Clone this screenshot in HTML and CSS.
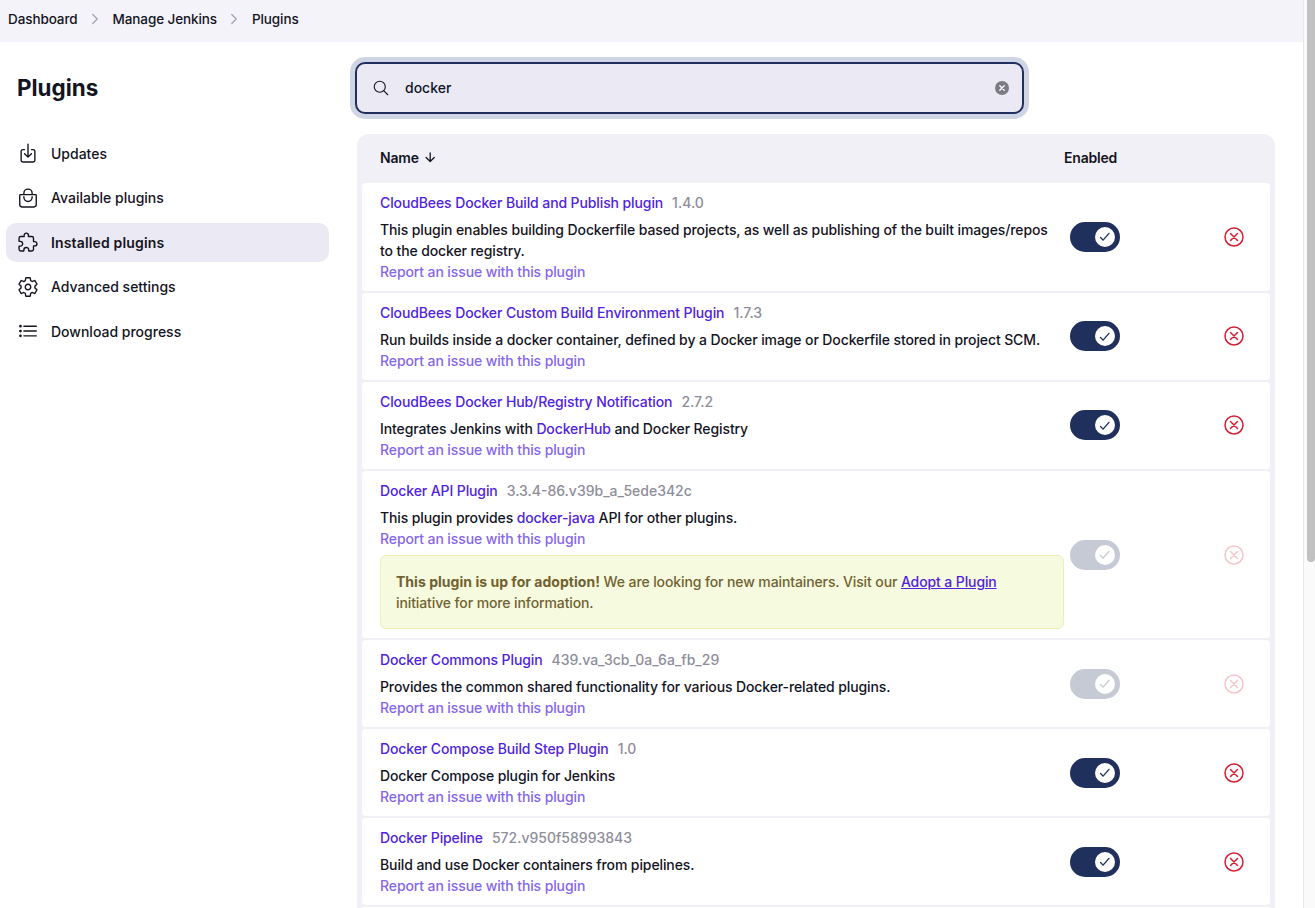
FILE: index.html
```html
<!DOCTYPE html>
<html lang="en">
<head>
  <meta charset="UTF-8" />
  <title>Plugins</title>
  <link rel="stylesheet" href="styles.css">
</head>
<body>

<div id="scrollbar"><div id="scroll-thumb"></div></div>

<!-- Breadcrumbs -->
<nav class="breadcrumbs">
  <span>Dashboard</span>
  <svg class="crumb-sep" viewBox="0 0 512 512"><path d="M184 112l144 144-144 144"/></svg>
  <span>Manage Jenkins</span>
  <svg class="crumb-sep" viewBox="0 0 512 512"><path d="M184 112l144 144-144 144"/></svg>
  <span>Plugins</span>
</nav>

<div class="page">
  <aside class="sidebar">
    <h1>Plugins</h1>
    <ul class="side-nav">
      <li>
        <svg class="side-icon" viewBox="0 0 512 512"><path d="M336 176h40a40 40 0 0140 40v208a40 40 0 01-40 40H136a40 40 0 01-40-40V216a40 40 0 0140-40h40"/><path d="M176 272l80 80 80-80M256 48v288"/></svg>
        Updates
      </li>
      <li>
        <svg class="side-icon" viewBox="0 0 512 512"><path d="M80 176a16 16 0 00-16 16v216c0 30.240 25.760 56 56 56h272c30.240 0 56-24.510 56-54.750V192a16 16 0 00-16-16zM160 176v-32a96 96 0 0196-96h0a96 96 0 0196 96v32"/><path d="M160 224v16a96 96 0 0096 96h0a96 96 0 0096-96v-16"/></svg>
        Available plugins
      </li>
      <li class="active">
        <svg class="side-icon" viewBox="0 0 512 512"><path d="M413.660 246.100H386a2 2 0 01-2-2v-77.240A38.860 38.860 0 00345.140 128H267.900a2 2 0 01-2-2V98.340c0-27.140-21.500-49.860-48.640-50.330a49.530 49.530 0 00-50.400 49.510V126a2 2 0 01-2 2H87.620A39.740 39.740 0 0048 167.620V238a2 2 0 002 2h26.910c29.370 0 53.680 25.480 54.090 54.850.42 29.870-23.510 57.150-53.290 57.150H50a2 2 0 00-2 2v70.380A39.740 39.740 0 0087.620 464H158a2 2 0 002-2v-20.930c0-30.280 24.750-56.350 55-57.060 30.100-.7 57 20.310 57 50.280V462a2 2 0 002 2h71.140A38.860 38.860 0 00384 425.140v-78a2 2 0 012-2h28.480c27.630 0 49.520-22.670 49.520-50.400s-23.200-48.640-50.340-48.640z"/></svg>
        Installed plugins
      </li>
      <li>
        <svg class="side-icon" viewBox="0 0 512 512"><path d="M262.290 192.310a64 64 0 1057.400 57.400 64.130 64.130 0 00-57.400-57.400zM416.390 256a154.340 154.340 0 01-1.530 20.790l45.210 35.460a10.810 10.810 0 012.450 13.750l-42.770 74a10.810 10.810 0 01-13.140 4.590l-44.900-18.080a16.110 16.110 0 00-15.170 1.750A164.480 164.480 0 01325 400.800a15.940 15.940 0 00-8.820 12.140l-6.730 47.890a11.080 11.080 0 01-10.680 9.170h-85.540a11.110 11.110 0 01-10.690-8.870l-6.720-47.820a16.070 16.070 0 00-9-12.220 155.300 155.300 0 01-21.460-12.570 16 16 0 00-15.110-1.710l-44.890 18.070a10.810 10.810 0 01-13.140-4.580l-42.770-74a10.800 10.800 0 012.450-13.750l38.210-30a16.050 16.050 0 006-14.080c-.36-4.170-.58-8.330-.58-12.500s.21-8.270.58-12.350a16 16 0 00-6.070-13.940l-38.190-30A10.810 10.810 0 0149.480 186l42.770-74a10.810 10.810 0 0113.140-4.590l44.900 18.080a16.110 16.110 0 0015.170-1.750A164.480 164.480 0 01187 111.200a15.940 15.940 0 008.820-12.140l6.730-47.890A11.080 11.080 0 01213.230 42h85.540a11.110 11.110 0 0110.690 8.870l6.720 47.820a16.070 16.070 0 009 12.220 155.300 155.300 0 0121.460 12.570 16 16 0 0015.110 1.710l44.890-18.070a10.810 10.810 0 0113.140 4.580l42.770 74a10.800 10.800 0 01-2.450 13.750l-38.210 30a16.050 16.050 0 00-6.050 14.080c.33 4.140.55 8.300.55 12.470z"/></svg>
        Advanced settings
      </li>
      <li>
        <svg class="side-icon" viewBox="0 0 512 512"><path d="M160 144h288M160 256h288M160 368h288"/><circle cx="80" cy="144" r="16"/><circle cx="80" cy="256" r="16"/><circle cx="80" cy="368" r="16"/></svg>
        Download progress
      </li>
    </ul>
  </aside>

  <main class="content">
    <div class="search-box">
      <svg class="search-icon" viewBox="0 0 512 512"><path d="M221.090 64a157.090 157.090 0 10157.090 157.090A157.100 157.100 0 00221.090 64z"/><path d="M338.290 338.290L448 448"/></svg>
      <span class="search-text">docker</span>
      <svg class="search-clear" viewBox="0 0 14 14"><circle cx="7" cy="7" r="7"/><path d="m4.800 4.800 4.400 4.400m0-4.400-4.400 4.400"/></svg>
    </div>

    <div class="plugin-table">
      <div class="table-head">
        <div class="col-name">Name
          <svg class="sort-arrow" viewBox="0 0 512 512"><path d="M112 268l144 144 144-144M256 392V100"/></svg>
        </div>
        <div class="col-enabled">Enabled</div>
      </div>

      <div class="plugin-row first">
        <div class="plugin-info">
          <div class="plugin-title"><a>CloudBees Docker Build and Publish plugin</a><span class="version">1.4.0</span></div>
          <p class="plugin-desc">This plugin enables building Dockerfile based projects, as well as publishing of the built images/repos to the docker registry.</p>
          <a class="report">Report an issue with this plugin</a>
        </div>
        <div class="plugin-toggle"><span class="toggle"><span class="knob"><svg viewBox="0 0 512 512"><path d="M416 128L192 384l-96-96"/></svg></span></span></div>
        <div class="plugin-remove"><svg class="remove" viewBox="0 0 512 512"><path d="M448 256c0-106-86-192-192-192S64 150 64 256s86 192 192 192 192-86 192-192z"/><path d="M330 330L182 182M182 330l148-148"/></svg></div>
      </div>

      <div class="plugin-row">
        <div class="plugin-info">
          <div class="plugin-title"><a>CloudBees Docker Custom Build Environment Plugin</a><span class="version">1.7.3</span></div>
          <p class="plugin-desc">Run builds inside a docker container, defined by a Docker image or Dockerfile stored in project SCM.</p>
          <a class="report">Report an issue with this plugin</a>
        </div>
        <div class="plugin-toggle"><span class="toggle"><span class="knob"><svg viewBox="0 0 512 512"><path d="M416 128L192 384l-96-96"/></svg></span></span></div>
        <div class="plugin-remove"><svg class="remove" viewBox="0 0 512 512"><path d="M448 256c0-106-86-192-192-192S64 150 64 256s86 192 192 192 192-86 192-192z"/><path d="M330 330L182 182M182 330l148-148"/></svg></div>
      </div>

      <div class="plugin-row">
        <div class="plugin-info">
          <div class="plugin-title"><a>CloudBees Docker Hub/Registry Notification</a><span class="version">2.7.2</span></div>
          <p class="plugin-desc">Integrates Jenkins with <a>DockerHub</a> and Docker Registry</p>
          <a class="report">Report an issue with this plugin</a>
        </div>
        <div class="plugin-toggle"><span class="toggle"><span class="knob"><svg viewBox="0 0 512 512"><path d="M416 128L192 384l-96-96"/></svg></span></span></div>
        <div class="plugin-remove"><svg class="remove" viewBox="0 0 512 512"><path d="M448 256c0-106-86-192-192-192S64 150 64 256s86 192 192 192 192-86 192-192z"/><path d="M330 330L182 182M182 330l148-148"/></svg></div>
      </div>

      <div class="plugin-row locked">
        <div class="plugin-info">
          <div class="plugin-title"><a>Docker API Plugin</a><span class="version">3.3.4-86.v39b_a_5ede342c</span></div>
          <p class="plugin-desc">This plugin provides <a>docker-java</a> API for other plugins.</p>
          <a class="report">Report an issue with this plugin</a>
          <div class="adopt"><b>This plugin is up for adoption!</b> We are looking for new maintainers. Visit our <a>Adopt a Plugin</a> initiative for more information.</div>
        </div>
        <div class="plugin-toggle"><span class="toggle"><span class="knob"><svg viewBox="0 0 512 512"><path d="M416 128L192 384l-96-96"/></svg></span></span></div>
        <div class="plugin-remove"><svg class="remove" viewBox="0 0 512 512"><path d="M448 256c0-106-86-192-192-192S64 150 64 256s86 192 192 192 192-86 192-192z"/><path d="M330 330L182 182M182 330l148-148"/></svg></div>
      </div>

      <div class="plugin-row locked">
        <div class="plugin-info">
          <div class="plugin-title"><a>Docker Commons Plugin</a><span class="version">439.va_3cb_0a_6a_fb_29</span></div>
          <p class="plugin-desc">Provides the common shared functionality for various Docker-related plugins.</p>
          <a class="report">Report an issue with this plugin</a>
        </div>
        <div class="plugin-toggle"><span class="toggle"><span class="knob"><svg viewBox="0 0 512 512"><path d="M416 128L192 384l-96-96"/></svg></span></span></div>
        <div class="plugin-remove"><svg class="remove" viewBox="0 0 512 512"><path d="M448 256c0-106-86-192-192-192S64 150 64 256s86 192 192 192 192-86 192-192z"/><path d="M330 330L182 182M182 330l148-148"/></svg></div>
      </div>

      <div class="plugin-row">
        <div class="plugin-info">
          <div class="plugin-title"><a>Docker Compose Build Step Plugin</a><span class="version">1.0</span></div>
          <p class="plugin-desc">Docker Compose plugin for Jenkins</p>
          <a class="report">Report an issue with this plugin</a>
        </div>
        <div class="plugin-toggle"><span class="toggle"><span class="knob"><svg viewBox="0 0 512 512"><path d="M416 128L192 384l-96-96"/></svg></span></span></div>
        <div class="plugin-remove"><svg class="remove" viewBox="0 0 512 512"><path d="M448 256c0-106-86-192-192-192S64 150 64 256s86 192 192 192 192-86 192-192z"/><path d="M330 330L182 182M182 330l148-148"/></svg></div>
      </div>

      <div class="plugin-row">
        <div class="plugin-info">
          <div class="plugin-title"><a>Docker Pipeline</a><span class="version">572.v950f58993843</span></div>
          <p class="plugin-desc">Build and use Docker containers from pipelines.</p>
          <a class="report">Report an issue with this plugin</a>
        </div>
        <div class="plugin-toggle"><span class="toggle"><span class="knob"><svg viewBox="0 0 512 512"><path d="M416 128L192 384l-96-96"/></svg></span></span></div>
        <div class="plugin-remove"><svg class="remove" viewBox="0 0 512 512"><path d="M448 256c0-106-86-192-192-192S64 150 64 256s86 192 192 192 192-86 192-192z"/><path d="M330 330L182 182M182 330l148-148"/></svg></div>
      </div>

      <!-- next row, cut off by the window -->
      <div class="plugin-row row-stub"></div>
    </div>
  </main>
</div>

</body>
</html>
```

FILE: styles.css
```css
html, body {
  height: 100%;
  overflow: hidden;
}

body {
  margin: 0;
  font-family: Inter, "Liberation Sans", sans-serif;
  font-size: 14px;
  line-height: 21px;
  color: #14141f;
  background-color: #fff;
}

svg {
  fill: none;
  stroke: currentColor;
  stroke-width: 32;
  stroke-linecap: round;
  stroke-linejoin: round;
}

/* Breadcrumbs */
.breadcrumbs {
  display: flex;
  align-items: center;
  height: 42px;
  margin-right: 12px;
  padding-left: 8px;
  padding-bottom: 4px;
  box-sizing: border-box;
  font-size: 13.5px;
  font-weight: 450;
  letter-spacing: -0.1px;
  background-color: #f4f3f9;
}

.crumb-sep {
  flex: none;
  width: 16px;
  height: 16px;
  margin: 0 9.500px;
  color: #a3a2b2;
  stroke-width: 40;
}

/* Layout */
.page {
  display: flex;
  padding-right: 12px;
}

.sidebar {
  flex: none;
  width: 358px;
  box-sizing: border-box;
  padding: 0 29px 0 6px;
}

.sidebar h1 {
  margin: 30px 0 0 11px;
  font-size: 22.4px;
  line-height: 32px;
  font-weight: 700;
}

.side-nav {
  margin: 29.900px 0 0;
  padding: 0;
  list-style: none;
}

.side-nav li {
  display: flex;
  align-items: center;
  gap: 12px;
  height: 39px;
  margin-bottom: 5.500px;
  padding-left: 11px;
  font-weight: 500;
  border-radius: 10px;
}

.side-nav li.active {
  font-weight: 600;
  letter-spacing: 0.15px;
  background-color: #ebe9f3;
}

.side-icon {
  flex: none;
  width: 22px;
  height: 22px;
}

/* Search */
.content {
  flex: none;
  width: 917px;
}

.search-box {
  display: flex;
  align-items: center;
  width: 669px;
  height: 52px;
  margin: 20px 0 20px -3px;
  padding: 0 13px 1px 14.500px;
  box-sizing: border-box;
  background-color: #ebe9f3;
  border: 2px solid #20305c;
  border-radius: 10px;
  box-shadow: 0 0 0 5px #d0d5e6;
}

.search-icon {
  flex: none;
  width: 18px;
  height: 18px;
}

.search-text {
  flex: 1;
  margin-left: 15.500px;
  font-weight: 500;
}

.search-clear {
  flex: none;
  width: 14px;
  height: 14px;
  stroke-width: 1.300;
  stroke: #fff;
}

.search-clear circle {
  fill: #7c7b85;
  stroke: none;
}

/* Plugin table */
.plugin-table {
  margin-left: -1px;
  padding: 0 5px;
  background-color: #f2f0f7;
  border-radius: 12px 12px 0 0;
}

.table-head {
  display: flex;
  align-items: center;
  height: 49px;
  padding-bottom: 2px;
  box-sizing: border-box;
  font-weight: 600;
  letter-spacing: -0.2px;
}

.col-name {
  display: flex;
  align-items: center;
  flex: none;
  width: 702px;
  padding-left: 18px;
  box-sizing: border-box;
}

.sort-arrow {
  width: 14.400px;
  height: 14.400px;
  margin-left: 4px;
  stroke-width: 46;
}

.plugin-row {
  display: flex;
  margin-bottom: 2px;
  background-color: #fff;
  border-radius: 4px;
}

.row-stub {
  height: 0.800px;
  margin-bottom: 0;
}

.plugin-info {
  flex: none;
  width: 702px;
  padding: 9px 0 9.050px 18px;
  box-sizing: border-box;
  letter-spacing: -0.11px;
}

.first .plugin-info {
  padding-bottom: 8.900px;
}

.plugin-title {
  display: flex;
  margin-bottom: 6px;
  font-weight: 500;
}

a {
  color: #4f23e0;
}

.plugin-title a {
  font-weight: 500;
}

.version {
  margin-left: 9px;
  letter-spacing: 0;
  color: #8e8d9a;
}

.plugin-desc {
  margin: 0;
  font-weight: 450;
}

.plugin-desc a {
  font-weight: 500;
}

.report {
  display: block;
  color: #8666ec;
  font-weight: 500;
}

.adopt {
  margin-top: 6px;
  padding: 15px;
  color: #716232;
  font-weight: 500;
  background-color: #f6fade;
  border: 1px solid #eeeeb4;
  border-radius: 6px;
}

.adopt b {
  font-weight: 700;
  letter-spacing: 0.03px;
}

.adopt a {
  text-decoration: underline;
}

.plugin-toggle {
  display: flex;
  align-items: center;
  flex: none;
  width: 158px;
  padding-left: 6px;
  box-sizing: border-box;
}

.toggle {
  display: flex;
  align-items: center;
  justify-content: flex-end;
  width: 50px;
  height: 30px;
  padding-right: 5px;
  box-sizing: border-box;
  background-color: #20305c;
  border-radius: 15px;
}

.knob {
  display: flex;
  align-items: center;
  justify-content: center;
  width: 20px;
  height: 20px;
  background-color: #fff;
  border-radius: 50%;
}

.knob svg {
  width: 13.500px;
  height: 13.500px;
  stroke-width: 52;
  color: #20305c;
}

.plugin-remove {
  display: flex;
  align-items: center;
}

.remove {
  width: 24px;
  height: 24px;
  color: #d51f35;
}

.locked .toggle,
.locked .remove {
  opacity: 0.25;
}

/* Scrollbar */
#scrollbar {
  position: absolute;
  top: 0;
  right: 0;
  bottom: 0;
  width: 12px;
  padding-left: 3px;
  background-color: #fafafa;
  border-left: 1px solid #e8e8e8;
  box-sizing: border-box;
}

#scroll-thumb {
  width: 8px;
  height: 562px;
  background-color: #c1c1c1;
  border-radius: 0 0 4px 4px;
}
```
